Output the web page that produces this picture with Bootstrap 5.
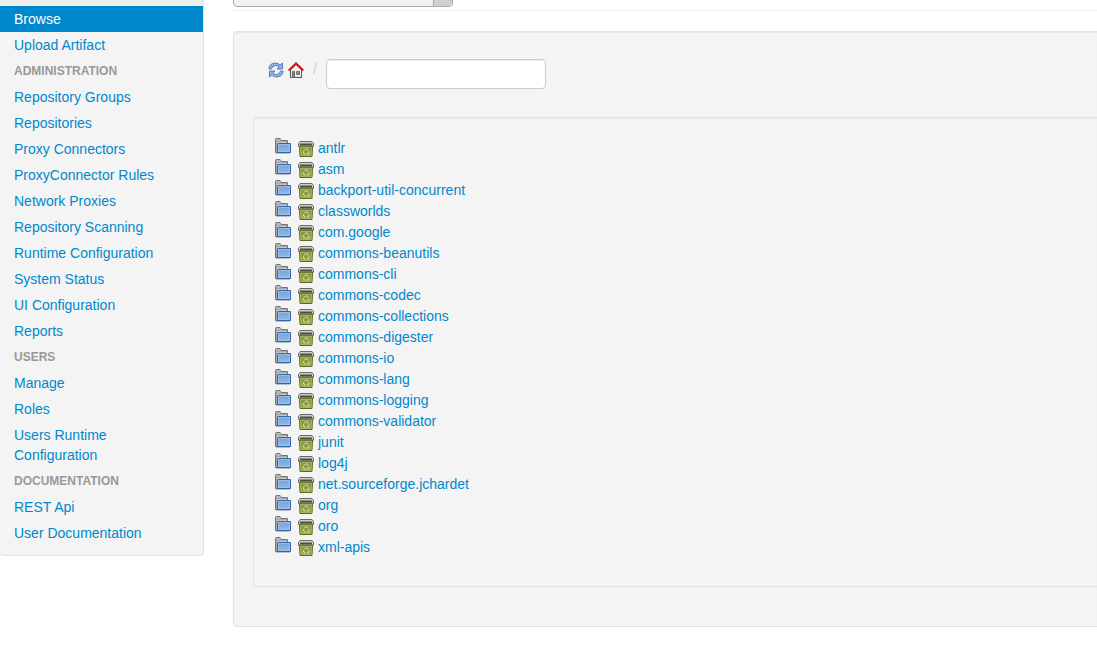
<!DOCTYPE html>
<html lang="en">
<head>
<meta charset="utf-8">
<meta name="viewport" content="width=device-width, initial-scale=1">
<title>Browse repository</title>
<link href="https://cdn.jsdelivr.net/npm/bootstrap@5.3.0/dist/css/bootstrap.min.css" rel="stylesheet">
<style>
body { font: 14px/20px "Liberation Sans", Arial, sans-serif; color: #333; background: #fff; overflow-x: hidden; }
a { color: #08c; text-decoration: none; }
a:hover { text-decoration: underline; }
.panel-well { background: #f4f4f4; border: 1px solid #e2e2e2; border-radius: 4px; box-shadow: inset 0 1px 1px rgba(0,0,0,.05); }
.side { width: 204px; padding-bottom: 9px; }
.side .nav-link { color: #08c; padding: 3px 14px; line-height: 20px; }
.side .nav-link.active { background: #08c; color: #fff; }
.side-gap { height: 6px; background: #eee; }
.side-title { padding: 3px 14px; font-size: 12px; font-weight: bold; line-height: 20px; color: #999; text-transform: uppercase; }
.main-col { margin-left: 29px; min-width: 0; }
.picker { height: 7px; }
.repo-box { width: 220px; height: 26px; flex: none; border: 1px solid #aaa; border-radius: 0 0 4px 4px; background: linear-gradient(#fff, #eee); }
.repo-select { appearance: none; border: 0; background: none; padding: 0 8px; min-width: 0; }
.repo-arrow { width: 19px; border-left: 1px solid #aaa; background: #d0d0d0; border-radius: 0 0 3px 0; }
.rule { margin: 3px 0 20px; border-top: 1px solid #eee; }
.outer-well { padding: 19px 0 19px 19px; }
.crumbs { padding: 8px 15px; margin-bottom: 20px; }
.crumbs svg { margin-top: 3px; }
.crumbs .slash { color: #ccc; margin: 0 9px; }
.path-box { width: 220px; height: 30px; padding: 4px 6px; border: 1px solid #ccc; border-radius: 4px; box-shadow: inset 0 1px 1px rgba(0,0,0,.075); font-size: 14px; }
.tree-well { padding: 19px 21px 29px; margin-bottom: 20px; }
.tree li { height: 21px; }
.tree svg.folder { margin: 0 7px 3px 0; }
.tree svg.bin { margin: 3px 4px 0 0; }
.tree button { line-height: 0; }
</style>
</head>
<body>
<svg width="0" height="0" class="position-absolute" aria-hidden="true">
  <defs>
    <linearGradient id="blue" x1="0" y1="0" x2="0" y2="1"><stop offset="0" stop-color="#77a3d6"/><stop offset="1" stop-color="#8fb8e6"/></linearGradient>
    <linearGradient id="green" x1="0" y1="0" x2="0" y2="1"><stop offset="0" stop-color="#7d8c3c"/><stop offset="1" stop-color="#a3b04c"/></linearGradient>
    <symbol id="folder" viewBox="0 0 16 16">
      <path d="M.5 14.500V1.500q0-1 1-1h3.500l1.500 2h6v12z" fill="#a8a8a8" stroke="#757575"/>
      <path d="M1.500 2h4M2 4.500h10" stroke="#c6c6c6"/>
      <path d="M3.500 5.500h12v9h-12q-1 0-1-1v-7q0-1 1-1z" fill="url(#blue)" stroke="#3465a4"/>
      <path d="M3.500 13.500v-7h11v7z" fill="none" stroke="#a9c8ea" opacity=".7"/>
      <path d="M1 15h14" stroke="#3b5f8f" opacity=".7"/>
    </symbol>
    <symbol id="bin" viewBox="0 0 16 16">
      <path d="M1.500 5.500h13l-.5 10H2z" fill="url(#green)" stroke="#5c6a22"/>
      <path d="M2.500 6.500h11l-.5 8H3z" fill="none" stroke="#a8b55a"/>
      <path d="M2 .500h12l1.500 2v2.500H.5V2.500z" fill="#cfcfc8" stroke="#6a6b5c"/>
      <path d="M2 2.500h12v2H2z" fill="#4b4e42"/>
      <path d="M.5 5.500h15" stroke="#6b7832"/>
      <path d="M6 9.500l1.500-1.500h2l1 1.500M11 10.500l-.5 2.500H9M7.500 13.500L5.500 12v-1.500" fill="none" stroke="#dce4b0"/>
    </symbol>
  </defs>
</svg>

<div class="d-flex align-items-start">
  <nav class="side panel-well flex-shrink-0 border-start-0 border-top-0 rounded-top-0" aria-label="Main menu">
    <div class="side-gap"></div>
    <div class="nav flex-column">
      <a class="nav-link active" href="#" aria-current="page">Browse</a>
      <a class="nav-link" href="#">Upload Artifact</a>
      <div class="side-title">Administration</div>
      <a class="nav-link" href="#">Repository Groups</a>
      <a class="nav-link" href="#">Repositories</a>
      <a class="nav-link" href="#">Proxy Connectors</a>
      <a class="nav-link" href="#">ProxyConnector Rules</a>
      <a class="nav-link" href="#">Network Proxies</a>
      <a class="nav-link" href="#">Repository Scanning</a>
      <a class="nav-link" href="#">Runtime Configuration</a>
      <a class="nav-link" href="#">System Status</a>
      <a class="nav-link" href="#">UI Configuration</a>
      <a class="nav-link" href="#">Reports</a>
      <div class="side-title">Users</div>
      <a class="nav-link" href="#">Manage</a>
      <a class="nav-link" href="#">Roles</a>
      <a class="nav-link" href="#">Users Runtime Configuration</a>
      <div class="side-title">Documentation</div>
      <a class="nav-link" href="#">REST Api</a>
      <a class="nav-link" href="#">User Documentation</a>
    </div>
  </nav>

  <main class="main-col flex-grow-1">
    <div class="picker d-flex align-items-end overflow-hidden">
      <div class="repo-box d-flex">
        <select class="repo-select flex-grow-1" aria-label="Repository"><option value=""></option></select>
        <span class="repo-arrow"></span>
      </div>
    </div>
    <div class="rule"></div>

    <section class="panel-well outer-well border-end-0 rounded-end-0">
      <div class="crumbs d-flex">
        <a href="#" aria-label="Refresh"><svg class="d-block" width="16" height="16" viewBox="0 0 16 16">
          <path d="M1 7q0-5.500 6-6 3.500 0 5 2l2.500-2v6H9l2-2Q9.500 3.500 7.500 3.500 4 4 3.500 7z" fill="#8fb3e0" stroke="#3a6cb0" stroke-width=".8"/>
          <path d="M15 9q0 5.500-6 6-3.500 0-5-2l-2.500 2V9H7l-2 2q1.500 1.500 3.500 1.500 3.500-.5 4-3.500z" fill="#8fb3e0" stroke="#3a6cb0" stroke-width=".8"/>
        </svg></a>
        <a href="#" class="ms-1" aria-label="Home"><svg class="d-block" width="16" height="16" viewBox="0 0 16 16">
          <path d="M2.500 8L8 2.500 13.500 8v7.500h-11z" fill="#ececec" stroke="#555"/>
          <path d="M4.500 9.500h2v6h-2z" fill="#8a8a8a" stroke="#666"/>
          <path d="M8.500 9.500h3v3h-3z" fill="#7d8da6" stroke="#777"/>
          <path d="M.7 8.500L8 1.300l7.300 7.200" fill="none" stroke="#d01010" stroke-width="1.800"/>
        </svg></a>
        <span class="slash">/</span>
        <input class="path-box" type="text" aria-label="Path">
      </div>

      <div class="panel-well tree-well border-end-0 rounded-end-0">
        <ul class="tree list-unstyled mb-0">
          <li class="d-flex align-items-center"><svg class="folder" width="16" height="16"><use href="#folder"/></svg><button class="btn p-0 border-0" aria-label="Delete"><svg class="bin" width="16" height="16"><use href="#bin"/></svg></button><a href="#">antlr</a></li>
          <li class="d-flex align-items-center"><svg class="folder" width="16" height="16"><use href="#folder"/></svg><button class="btn p-0 border-0" aria-label="Delete"><svg class="bin" width="16" height="16"><use href="#bin"/></svg></button><a href="#">asm</a></li>
          <li class="d-flex align-items-center"><svg class="folder" width="16" height="16"><use href="#folder"/></svg><button class="btn p-0 border-0" aria-label="Delete"><svg class="bin" width="16" height="16"><use href="#bin"/></svg></button><a href="#">backport-util-concurrent</a></li>
          <li class="d-flex align-items-center"><svg class="folder" width="16" height="16"><use href="#folder"/></svg><button class="btn p-0 border-0" aria-label="Delete"><svg class="bin" width="16" height="16"><use href="#bin"/></svg></button><a href="#">classworlds</a></li>
          <li class="d-flex align-items-center"><svg class="folder" width="16" height="16"><use href="#folder"/></svg><button class="btn p-0 border-0" aria-label="Delete"><svg class="bin" width="16" height="16"><use href="#bin"/></svg></button><a href="#">com.google</a></li>
          <li class="d-flex align-items-center"><svg class="folder" width="16" height="16"><use href="#folder"/></svg><button class="btn p-0 border-0" aria-label="Delete"><svg class="bin" width="16" height="16"><use href="#bin"/></svg></button><a href="#">commons-beanutils</a></li>
          <li class="d-flex align-items-center"><svg class="folder" width="16" height="16"><use href="#folder"/></svg><button class="btn p-0 border-0" aria-label="Delete"><svg class="bin" width="16" height="16"><use href="#bin"/></svg></button><a href="#">commons-cli</a></li>
          <li class="d-flex align-items-center"><svg class="folder" width="16" height="16"><use href="#folder"/></svg><button class="btn p-0 border-0" aria-label="Delete"><svg class="bin" width="16" height="16"><use href="#bin"/></svg></button><a href="#">commons-codec</a></li>
          <li class="d-flex align-items-center"><svg class="folder" width="16" height="16"><use href="#folder"/></svg><button class="btn p-0 border-0" aria-label="Delete"><svg class="bin" width="16" height="16"><use href="#bin"/></svg></button><a href="#">commons-collections</a></li>
          <li class="d-flex align-items-center"><svg class="folder" width="16" height="16"><use href="#folder"/></svg><button class="btn p-0 border-0" aria-label="Delete"><svg class="bin" width="16" height="16"><use href="#bin"/></svg></button><a href="#">commons-digester</a></li>
          <li class="d-flex align-items-center"><svg class="folder" width="16" height="16"><use href="#folder"/></svg><button class="btn p-0 border-0" aria-label="Delete"><svg class="bin" width="16" height="16"><use href="#bin"/></svg></button><a href="#">commons-io</a></li>
          <li class="d-flex align-items-center"><svg class="folder" width="16" height="16"><use href="#folder"/></svg><button class="btn p-0 border-0" aria-label="Delete"><svg class="bin" width="16" height="16"><use href="#bin"/></svg></button><a href="#">commons-lang</a></li>
          <li class="d-flex align-items-center"><svg class="folder" width="16" height="16"><use href="#folder"/></svg><button class="btn p-0 border-0" aria-label="Delete"><svg class="bin" width="16" height="16"><use href="#bin"/></svg></button><a href="#">commons-logging</a></li>
          <li class="d-flex align-items-center"><svg class="folder" width="16" height="16"><use href="#folder"/></svg><button class="btn p-0 border-0" aria-label="Delete"><svg class="bin" width="16" height="16"><use href="#bin"/></svg></button><a href="#">commons-validator</a></li>
          <li class="d-flex align-items-center"><svg class="folder" width="16" height="16"><use href="#folder"/></svg><button class="btn p-0 border-0" aria-label="Delete"><svg class="bin" width="16" height="16"><use href="#bin"/></svg></button><a href="#">junit</a></li>
          <li class="d-flex align-items-center"><svg class="folder" width="16" height="16"><use href="#folder"/></svg><button class="btn p-0 border-0" aria-label="Delete"><svg class="bin" width="16" height="16"><use href="#bin"/></svg></button><a href="#">log4j</a></li>
          <li class="d-flex align-items-center"><svg class="folder" width="16" height="16"><use href="#folder"/></svg><button class="btn p-0 border-0" aria-label="Delete"><svg class="bin" width="16" height="16"><use href="#bin"/></svg></button><a href="#">net.sourceforge.jchardet</a></li>
          <li class="d-flex align-items-center"><svg class="folder" width="16" height="16"><use href="#folder"/></svg><button class="btn p-0 border-0" aria-label="Delete"><svg class="bin" width="16" height="16"><use href="#bin"/></svg></button><a href="#">org</a></li>
          <li class="d-flex align-items-center"><svg class="folder" width="16" height="16"><use href="#folder"/></svg><button class="btn p-0 border-0" aria-label="Delete"><svg class="bin" width="16" height="16"><use href="#bin"/></svg></button><a href="#">oro</a></li>
          <li class="d-flex align-items-center"><svg class="folder" width="16" height="16"><use href="#folder"/></svg><button class="btn p-0 border-0" aria-label="Delete"><svg class="bin" width="16" height="16"><use href="#bin"/></svg></button><a href="#">xml-apis</a></li>
        </ul>
      </div>
    </section>
  </main>
</div>
<script src="https://cdn.jsdelivr.net/npm/bootstrap@5.3.0/dist/js/bootstrap.bundle.min.js"></script>
</body>
</html>
